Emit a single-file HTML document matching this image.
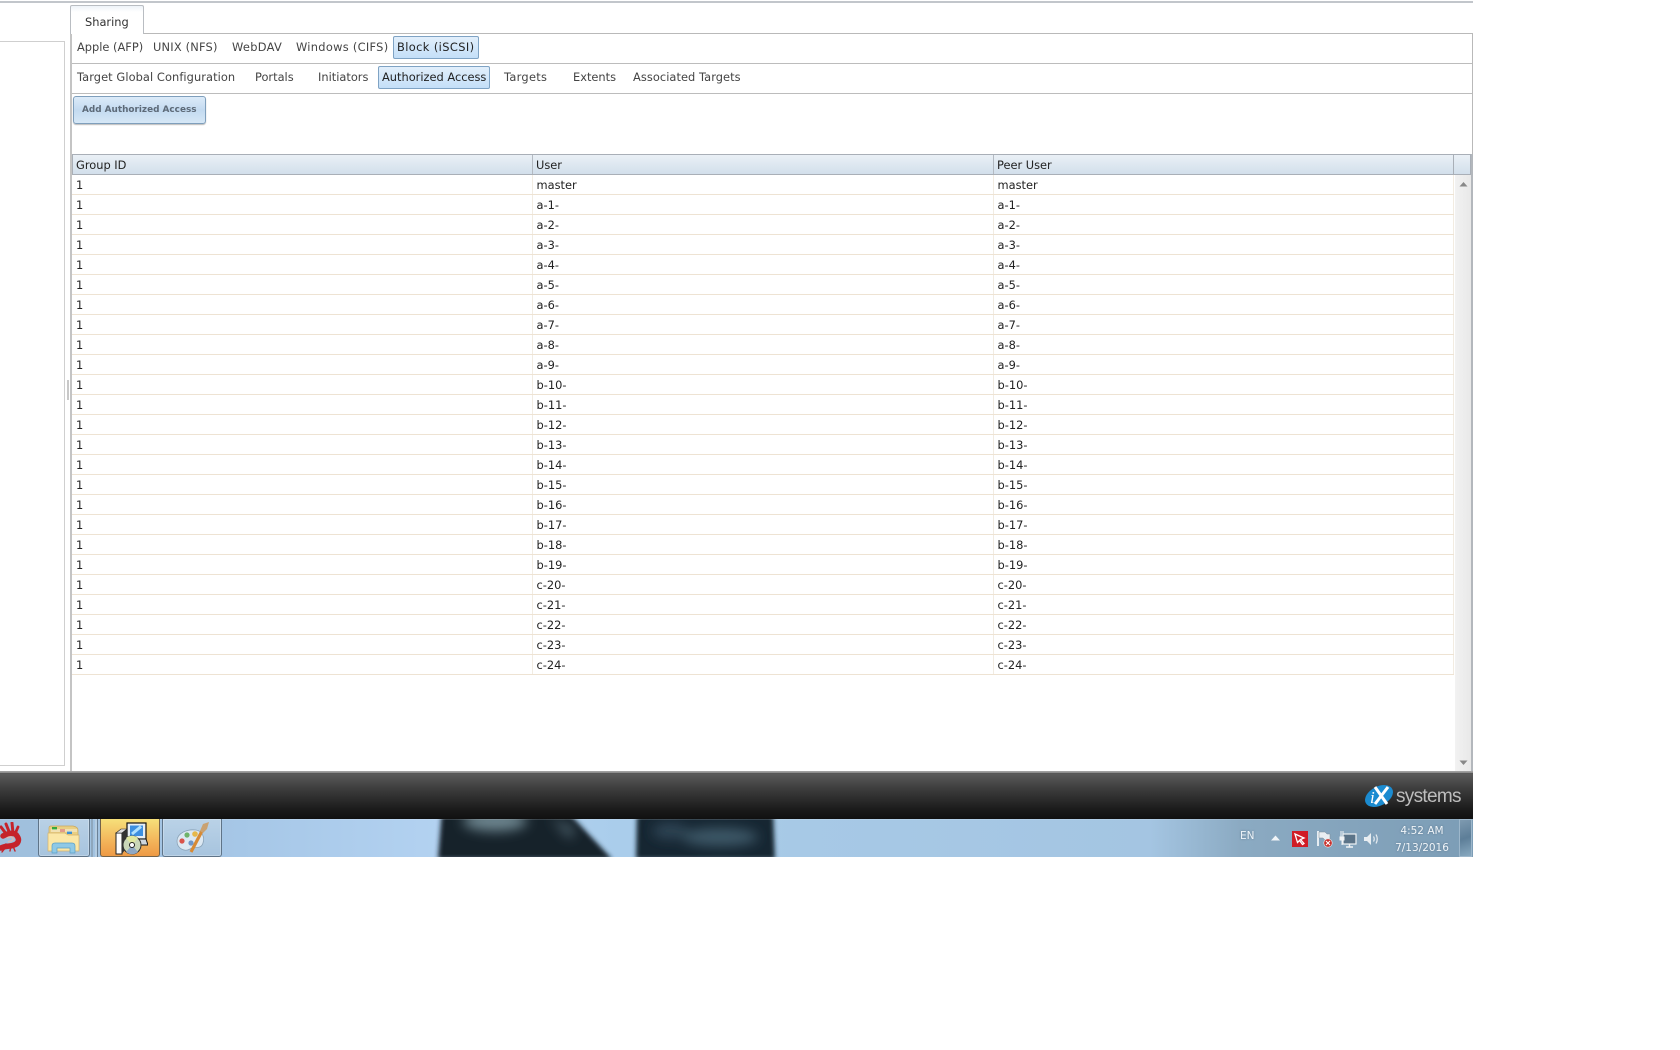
<!DOCTYPE html>
<html><head><meta charset="utf-8"><title>Sharing</title>
<style>
html,body{margin:0;padding:0;background:#fff;width:1680px;height:1050px;overflow:hidden}
body{font-family:"DejaVu Sans","Liberation Sans",sans-serif;font-size:11.4px;color:#444;position:relative}
.a{position:absolute}
.t{position:absolute;white-space:nowrap;line-height:14px}
.act{position:absolute;background:linear-gradient(#e2effb,#c4dff8);border:1px solid #7fa3c4;border-radius:2px;box-sizing:border-box}
table{position:absolute;left:72px;top:175px;width:1381px;border-collapse:collapse;table-layout:fixed;font-size:11.4px;color:#222}
td{height:17px;padding:2px 0 0 4px;border-bottom:1px solid #eee3d3;border-right:1px solid #f2ece2;box-sizing:content-box;line-height:17px;white-space:nowrap}
.sq{position:absolute;color:#f0f5f9;white-space:nowrap;text-shadow:0 0 2px rgba(40,60,80,.4)}
</style></head><body>

<div class="a" style="left:0;top:1px;width:1473px;height:2px;background:#c2c6cb"></div>

<!-- left panel -->
<div class="a" style="left:-2px;top:41px;width:65px;height:723px;border:1px solid #cfcfcf;background:#fff"></div>
<div class="a" style="left:67px;top:380px;width:2px;height:20px;background:#c8c8c8"></div>

<!-- main panel -->
<div class="a" style="left:70px;top:33px;width:1400px;height:739px;border:1px solid #b9b9b9;border-left:2px solid #c4c4c4;background:#fff;box-sizing:content-box"></div>
<div class="a" style="left:70px;top:5px;width:74px;height:29px;border:1px solid #b9bdc2;border-bottom:none;box-sizing:border-box;background:linear-gradient(#eef3f8 0,#fff 6px);border-radius:2px 2px 0 0"></div>
<div class="t" style="left:85px;top:15px;color:#333">Sharing</div>

<div class="a" style="left:72px;top:63px;width:1400px;height:1px;background:#bcbcbc"></div>
<div class="a" style="left:72px;top:93px;width:1400px;height:1px;background:#bcbcbc"></div>

<div class="t" style="left:77px;top:40px">Apple (AFP)</div>
<div class="t" style="left:153px;top:40px;letter-spacing:.2px">UNIX (NFS)</div>
<div class="t" style="left:232px;top:40px;letter-spacing:.3px">WebDAV</div>
<div class="t" style="left:296px;top:40px;letter-spacing:.3px">Windows (CIFS)</div>
<div class="act" style="left:393px;top:36px;width:86px;height:23px"></div>
<div class="t" style="left:397px;top:40px;color:#222;letter-spacing:.4px">Block (iSCSI)</div>

<div class="t" style="left:77px;top:70px;letter-spacing:.08px">Target Global Configuration</div>
<div class="t" style="left:255px;top:70px">Portals</div>
<div class="t" style="left:318px;top:70px">Initiators</div>
<div class="act" style="left:378px;top:66px;width:112px;height:23px"></div>
<div class="t" style="left:382px;top:70px;color:#222">Authorized Access</div>
<div class="t" style="left:504px;top:70px;letter-spacing:.3px">Targets</div>
<div class="t" style="left:573px;top:70px">Extents</div>
<div class="t" style="left:633px;top:70px;letter-spacing:.06px">Associated Targets</div>

<div class="a" style="left:73px;top:96px;width:133px;height:28px;box-sizing:border-box;border:1px solid #7f9fbc;border-radius:3px;background:linear-gradient(#dcebf9,#c3daf0 50%,#d6e7f6);box-shadow:0 1px 1px #bbb"></div>
<div class="t" style="left:82px;top:103px;font-weight:bold;font-size:8.9px;color:#5d6a78">Add Authorized Access</div>

<!-- table header -->
<div class="a" style="left:72px;top:154px;width:1400px;height:21px;box-sizing:border-box;border:1px solid #a9afb7;border-width:1px 2px 1px 1px;background:linear-gradient(#eaf0f6,#d2dfeb)"></div>
<div class="a" style="left:532px;top:155px;width:1px;height:19px;background:#b4bac2"></div>
<div class="a" style="left:993px;top:155px;width:1px;height:19px;background:#b4bac2"></div>
<div class="a" style="left:1453px;top:155px;width:1px;height:19px;background:#a9afb7"></div>
<div class="t" style="left:76px;top:158px;color:#222">Group ID</div>
<div class="t" style="left:536px;top:158px;color:#222">User</div>
<div class="t" style="left:997px;top:158px;color:#222">Peer User</div>

<!-- scrollbar -->
<div class="a" style="left:1455px;top:175px;width:16px;height:597px;background:linear-gradient(90deg,#f2f2f2,#e8e8e8)"></div>
<div class="a" style="left:1471px;top:154px;width:2px;height:618px;background:#b3b7bc"></div>
<svg class="a" style="left:1459px;top:181px" width="9" height="6"><path d="M0.5 5.5L4.5 1L8.5 5.5Z" fill="#888"/></svg>
<svg class="a" style="left:1459px;top:760px" width="9" height="6"><path d="M0.5 0.5L4.5 5L8.5 0.5Z" fill="#888"/></svg>

<table><colgroup><col style="width:460px"><col style="width:461px"><col style="width:460px"></colgroup>
<tr><td>1</td><td>master</td><td>master</td></tr>
<tr><td>1</td><td>a-1-</td><td>a-1-</td></tr>
<tr><td>1</td><td>a-2-</td><td>a-2-</td></tr>
<tr><td>1</td><td>a-3-</td><td>a-3-</td></tr>
<tr><td>1</td><td>a-4-</td><td>a-4-</td></tr>
<tr><td>1</td><td>a-5-</td><td>a-5-</td></tr>
<tr><td>1</td><td>a-6-</td><td>a-6-</td></tr>
<tr><td>1</td><td>a-7-</td><td>a-7-</td></tr>
<tr><td>1</td><td>a-8-</td><td>a-8-</td></tr>
<tr><td>1</td><td>a-9-</td><td>a-9-</td></tr>
<tr><td>1</td><td>b-10-</td><td>b-10-</td></tr>
<tr><td>1</td><td>b-11-</td><td>b-11-</td></tr>
<tr><td>1</td><td>b-12-</td><td>b-12-</td></tr>
<tr><td>1</td><td>b-13-</td><td>b-13-</td></tr>
<tr><td>1</td><td>b-14-</td><td>b-14-</td></tr>
<tr><td>1</td><td>b-15-</td><td>b-15-</td></tr>
<tr><td>1</td><td>b-16-</td><td>b-16-</td></tr>
<tr><td>1</td><td>b-17-</td><td>b-17-</td></tr>
<tr><td>1</td><td>b-18-</td><td>b-18-</td></tr>
<tr><td>1</td><td>b-19-</td><td>b-19-</td></tr>
<tr><td>1</td><td>c-20-</td><td>c-20-</td></tr>
<tr><td>1</td><td>c-21-</td><td>c-21-</td></tr>
<tr><td>1</td><td>c-22-</td><td>c-22-</td></tr>
<tr><td>1</td><td>c-23-</td><td>c-23-</td></tr>
<tr><td>1</td><td>c-24-</td><td>c-24-</td></tr>
</table>

<!-- bottom edge + dark bar -->
<div class="a" style="left:0;top:771px;width:1473px;height:3px;background:linear-gradient(#a9a9a9,#8a8a8a 60%,#333)"></div>
<div class="a" style="left:0;top:774px;width:1473px;height:45px;background:linear-gradient(#5a5a5a,#3f3f3f 30%,#1a1a1a 80%,#101010)"></div>

<!-- iX logo -->
<svg class="a" style="left:1364px;top:783px" width="34" height="26">
<ellipse cx="15" cy="13" rx="15" ry="9.5" transform="rotate(-28 15 13)" fill="#1b8bd0"/>
<text x="6" y="20" font-family="Liberation Serif,serif" font-style="italic" font-size="17" fill="#fff">i</text>
<path d="M11 4L23 21M24 4L11 21" stroke="#fff" stroke-width="3" fill="none"/>
</svg>
<div class="t" style="left:1396px;top:787px;font-family:'Liberation Sans',sans-serif;font-size:19px;line-height:20px;color:#bdbdbd;letter-spacing:-.7px">systems</div>

<!-- taskbar -->
<div class="a" style="left:0;top:819px;width:1473px;height:38px;overflow:hidden;background:linear-gradient(90deg,#9fbfdc 0,#a5c6e6 222px,#b3d2f1 440px,#aacdeb 620px,#a7c9e6 800px,#a4c5e2 1150px,#8baac2 1240px,#7c9db6 1473px)">
<svg class="a" style="left:400px;top:-10px" width="420" height="60">
<defs><filter id="b" x="-10%" y="-30%" width="120%" height="160%"><feGaussianBlur stdDeviation="2.5"/></filter><filter id="c" x="-30%" y="-50%" width="160%" height="200%"><feGaussianBlur stdDeviation="6"/></filter></defs>
<g filter="url(#b)">
<path d="M42 0H165L212 50H38Z" fill="#15222b"/>
<path d="M237 0H373L375 50H236Z" fill="#182833"/>
</g>
<g filter="url(#c)">
<ellipse cx="95" cy="12" rx="32" ry="10" fill="#6d858f"/>
<path d="M150 8L170 30L175 20Z" fill="#4f636e"/>
<ellipse cx="320" cy="28" rx="38" ry="9" fill="#3e5868"/>
<ellipse cx="270" cy="22" rx="18" ry="8" fill="#2f4554"/>
</g>
</svg>
 <div class="a" style="left:0;top:0;width:100%;height:1px;background:rgba(255,255,255,.15)"></div>
</div>

<!-- taskbar buttons -->
<div class="a" style="left:38px;top:819px;width:52px;height:38px;box-sizing:border-box;border:1px solid #5f7488;border-top:none;border-radius:0 0 3px 3px;background:linear-gradient(#b9d1e6,#a7c4de);box-shadow:inset 0 0 0 1px rgba(255,255,255,.25)"></div>
<div class="a" style="left:91px;top:819px;width:2px;height:38px;background:#8ea7bd"></div>
<div class="a" style="left:95px;top:819px;width:3px;height:38px;background:#b5cde2;border-right:1px solid #6b8197;box-sizing:border-box"></div>
<div class="a" style="left:100px;top:819px;width:60px;height:38px;box-sizing:border-box;border:1px solid #73634a;border-top:none;border-radius:0 0 3px 3px;background:linear-gradient(#f6e07a,#f3b45a 60%,#ee9a45)"></div>
<div class="a" style="left:162px;top:819px;width:60px;height:38px;box-sizing:border-box;border:1px solid #5f7488;border-top:none;border-radius:0 0 3px 3px;background:linear-gradient(#bad2e7,#a7c4de);box-shadow:inset 0 0 0 1px rgba(255,255,255,.25)"></div>

<!-- hand icon -->
<svg class="a" style="left:0;top:822px" width="24" height="32"><g fill="none" stroke="#c5232a" stroke-linecap="round">
<path d="M1 5L7 13M6 2L10 12M12 1L13 11" stroke-width="3"/>
<path d="M18 5L15 12" stroke-width="2.8"/>
<path d="M3 14C8 11 15 10 17 14C20 18 18 22 14 23C10 25 7 23 1 26" stroke-width="5.500"/>
<path d="M0 25L6 22M2 30L6 25M10 29L11 24M15 29L13 24" stroke-width="1.4"/></g>
<path d="M7 16C10 14 13 15 13 17C13 19 10 19 8 20" stroke="#d8b9b3" stroke-width="1.6" fill="none"/></svg>

<!-- folder icon -->
<svg class="a" style="left:47px;top:822px" width="34" height="33">
<path d="M2 6Q2 4 4 4H26Q31 5 31 8V28H2Z" fill="#e9cf83" stroke="#c9a860" stroke-width=".7"/>
<rect x="5" y="5" width="5" height="3" fill="#35a83d"/><rect x="13" y="7" width="5" height="3" fill="#c8362c"/><rect x="20" y="9" width="5" height="3" fill="#3d8fd0"/>
<rect x="4" y="7" width="26" height="3" fill="#f7f0d9" opacity=".55"/>
<path d="M1 11H18L21 13H32V29H1Z" fill="#fbe7a6" stroke="#d4b26c" stroke-width=".7"/>
<path d="M5 31V24Q5 21 8 21H25Q28 21 28 24V31H23V26H10V31Z" fill="#8fc9e6" stroke="#5a9fc6" stroke-width=".7"/>
</svg>

<!-- installer icon -->
<svg class="a" style="left:114px;top:821px" width="34" height="35">
<rect x="13" y="2" width="19" height="16" fill="#e8eef4" stroke="#111" stroke-width="1.2"/>
<rect x="16" y="4.500" width="13" height="10.5" fill="#3d8fe0"/><path d="M18 13L27 5.5" stroke="#aee0ff" stroke-width="3"/>
<path d="M12 18H32L34 24H14Z" fill="#cfd6dc" stroke="#111"/>
<path d="M2 12H8V33H2Z" fill="#fff" stroke="#222"/><path d="M8 12L13 7V26L8 33Z" fill="#333"/><path d="M2 12L7 8H13L8 12Z" fill="#ddd" stroke="#222" stroke-width=".6"/>
<circle cx="18" cy="24" r="9" fill="#c9d6b8" stroke="#333"/><path d="M18 24L12 17A9 9 0 0 1 24 17Z" fill="#dfe8a0"/><path d="M18 24L24 31A9 9 0 0 1 12 31Z" fill="#8fa8c4"/><circle cx="18" cy="24" r="2.5" fill="#fff" stroke="#222"/>
</svg>

<!-- palette icon -->
<svg class="a" style="left:175px;top:821px" width="36" height="34">
<path d="M2 20C2 12 12 8 21 9C27 10 30 16 28 22C26 29 19 25 15 28C10 31 2 28 2 20Z" fill="#dce8f2" stroke="#8aa3b8" stroke-width=".8"/>
<circle cx="7" cy="20" r="2.6" fill="#d9534a"/><circle cx="12" cy="14" r="2.6" fill="#6fb36a"/><circle cx="20" cy="13" r="2.8" fill="#e6b84a"/><circle cx="16" cy="22" r="2.6" fill="#6f96c8"/>
<path d="M16 31L27 10" stroke="#d78a35" stroke-width="3.200"/>
<path d="M25 10L28 3L34 1L32 8L28 12Z" fill="#c9a272"/>
</svg>

<!-- tray -->
<div class="sq" style="left:1240px;top:829px;font-size:10.5px;line-height:14px">EN</div>
<svg class="a" style="left:1271px;top:835px" width="9" height="6"><path d="M0 5.5L4.5 .5L9 5.5Z" fill="#f1f5f8"/></svg>
<svg class="a" style="left:1292px;top:831px" width="16" height="16"><rect width="16" height="16" fill="#d01c25"/><path d="M3 3L12 7L8.5 8.5L12 12.5L10.5 13.5L7.5 9.5L5.5 11.5Z" fill="none" stroke="#fff" stroke-width="1.3"/></svg>
<svg class="a" style="left:1316px;top:830px" width="18" height="18"><path d="M2 1V16" stroke="#fff" stroke-width="1.6"/><path d="M3 2H9L11 4H14V10H9L7 8H3Z" fill="#e9eef2" stroke="#7c8b96" stroke-width=".5"/><circle cx="12" cy="13" r="4.2" fill="#c9302c" stroke="#eee" stroke-width=".6"/><path d="M10 11L14 15M14 11L10 15" stroke="#fff" stroke-width="1.1"/></svg>
<svg class="a" style="left:1339px;top:830px" width="18" height="18"><rect x="4" y="4" width="13" height="10" fill="#5b7488" stroke="#f0f3f5" stroke-width="1.2"/><path d="M7 17H14M10.5 14V17" stroke="#f0f3f5" stroke-width="1.4"/><path d="M1 7V10H5V7ZM2 7V1M4 7V1M3 10V15" fill="#f0f3f5" stroke="#f0f3f5" stroke-width="1"/></svg>
<svg class="a" style="left:1363px;top:830px" width="18" height="18"><path d="M1 7H4L8 3V15L4 11H1Z" fill="#e8edf1"/><path d="M10.5 6.5Q12 9 10.5 11.5M13 4.5Q15.5 9 13 13.500" stroke="#e8edf1" fill="none" stroke-width="1.2"/></svg>
<div class="sq" style="left:1380px;width:84px;top:824px;text-align:center;font-size:10.5px;line-height:14px">4:52 AM</div>
<div class="sq" style="left:1380px;width:84px;top:841px;text-align:center;font-size:10.5px;line-height:14px">7/13/2016</div>
<div class="a" style="left:1459px;top:819px;width:13px;height:38px;box-sizing:border-box;border:1px solid #9db7cb;background:linear-gradient(160deg,#7e9ab0,#5d7e98 50%,#88a9c0)"></div>

</body></html>
